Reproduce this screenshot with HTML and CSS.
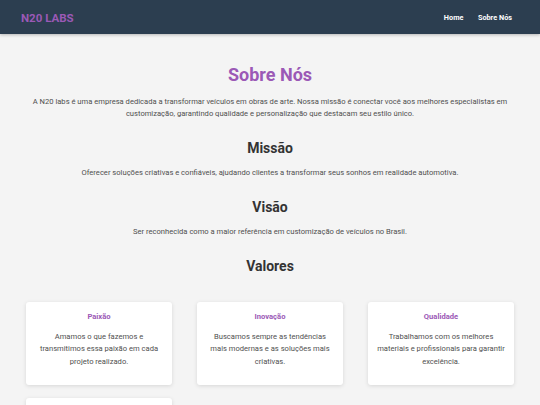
FILE: index.html
```html
<!DOCTYPE html>
<html lang="pt-BR">
<head>
<meta charset="utf-8">
<title>Sobre Nós - N20 Labs</title>
<link rel="stylesheet" href="styles.css">
</head>
<body>
<header class="topbar">
  <div class="logo">N20 LABS</div>
  <nav class="nav">
    <a href="#">Home</a>
    <a href="#">Sobre Nós</a>
  </nav>
</header>
<main class="content">
  <h1 class="title">Sobre Nós</h1>
  <p class="lead">A N20 labs é uma empresa dedicada a transformar veículos em obras de arte. Nossa missão é conectar você aos melhores especialistas em customização, garantindo qualidade e personalização que destacam seu estilo único.</p>
  <h2 class="section">Missão</h2>
  <p class="text">Oferecer soluções criativas e confiáveis, ajudando clientes a transformar seus sonhos em realidade automotiva.</p>
  <h2 class="section">Visão</h2>
  <p class="text">Ser reconhecida como a maior referência em customização de veículos no Brasil.</p>
  <h2 class="section">Valores</h2>
  <div class="cards">
    <div class="card">
      <h3 class="card-title">Paixão</h3>
      <p class="card-text">Amamos o que fazemos e transmitimos essa paixão em cada projeto realizado.</p>
    </div>
    <div class="card">
      <h3 class="card-title">Inovação</h3>
      <p class="card-text">Buscamos sempre as tendências mais modernas e as soluções mais criativas.</p>
    </div>
    <div class="card">
      <h3 class="card-title">Qualidade</h3>
      <p class="card-text">Trabalhamos com os melhores materiais e profissionais para garantir excelência.</p>
    </div>
    <div class="card">
      <h3 class="card-title">Compromisso</h3>
      <p class="card-text">Respeitamos prazos e garantimos a satisfação de nossos clientes.</p>
    </div>
  </div>
</main>
</body>
</html>
```
FILE: styles.css
```css
* { box-sizing: border-box; }
html, body { margin: 0; padding: 0; }
body {
  background: #f4f4f4;
  font-family: Roboto, "Liberation Sans", Arial, sans-serif;
  color: #555;
}
.topbar {
  height: 34px;
  background: #2c3e50;
  display: flex;
  align-items: center;
  justify-content: space-between;
  padding: 1px 28px 0 21px;
  box-shadow: 0 1px 3px rgba(0,0,0,0.25);
}
.logo {
  color: #9b59b6;
  font-weight: 700;
  font-size: 11.5px;
}
.nav { display: flex; gap: 14.5px; }
.nav a {
  color: #fff;
  text-decoration: none;
  font-size: 7.3px;
  font-weight: 700;
}
.content {
  padding: 29.5px 26px 0;
  text-align: center;
}
.title {
  margin: 0 0 11px;
  color: #9b59b6;
  font-size: 18px;
  line-height: 1.2;
  font-weight: 700;
}
.lead, .text {
  margin: 0;
  font-size: 7.6px;
  line-height: 12px;
  color: #4f4f4f;
}
.section {
  margin: 19.8px 0 10.5px;
  color: #333;
  font-size: 14px;
  line-height: 1.2;
  font-weight: 700;
}
.cards {
  margin-top: 27px;
  display: grid;
  grid-template-columns: repeat(3, 1fr);
  gap: 13px 25px;
}
.card {
  background: #fff;
  border-radius: 3px;
  box-shadow: 0 1px 4px rgba(0,0,0,0.12);
  padding: 10px 8px 16px;
  height: 83px;
}
.card-title {
  margin: 0 0 9px;
  color: #9b59b6;
  font-size: 7.6px;
  line-height: 10px;
  font-weight: 700;
}
.card-text {
  margin: 0;
  font-size: 7.6px;
  line-height: 12.5px;
  color: #4f4f4f;
}
```
